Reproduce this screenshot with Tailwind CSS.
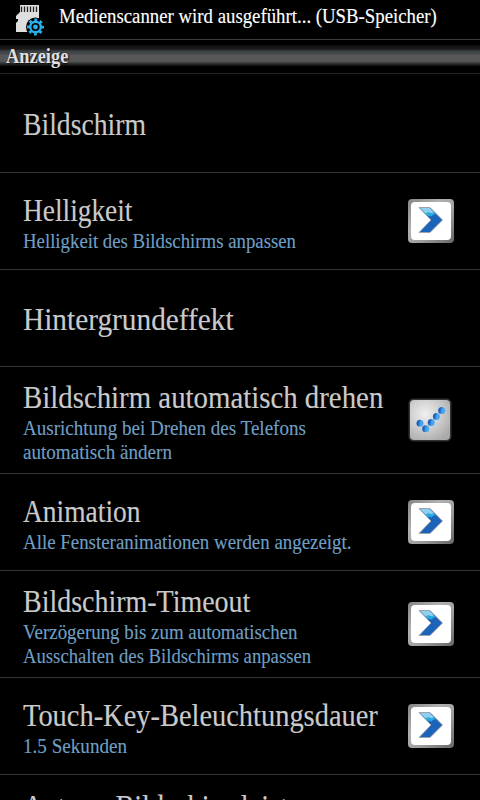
<!DOCTYPE html>
<html lang="de">
<head>
  <meta charset="UTF-8" />
  <meta name="viewport" content="width=device-width, initial-scale=1.0"/>
  <title>Anzeige</title>
  <script src="https://cdn.jsdelivr.net/npm/@tailwindcss/browser@4"></script>
</head>
<body class="bg-black overflow-hidden">
  <!-- Shared icons -->
  <svg class="absolute w-0 h-0">
    <defs>
      <linearGradient id="frame" x1="0" y1="0" x2="1" y2="1">
        <stop offset="0" stop-color="#858585"/>
        <stop offset=".35" stop-color="#b0b0b0"/>
        <stop offset=".6" stop-color="#a0a0a0"/>
        <stop offset="1" stop-color="#666"/>
      </linearGradient>
      <radialGradient id="plate" cx=".38" cy=".35" r=".75">
        <stop offset="0" stop-color="#f0f0f0"/>
        <stop offset=".5" stop-color="#cfcfcf"/>
        <stop offset="1" stop-color="#aaa"/>
      </radialGradient>
      <linearGradient id="ball" x1="0" y1="0" x2="1" y2=".2">
        <stop offset=".3" stop-color="#1a5fbe"/>
        <stop offset=".7" stop-color="#48a8ee"/>
      </linearGradient>
      <symbol id="more" viewBox="0 0 46 44">
        <rect width="46" height="44" rx="4" fill="url(#frame)"/>
        <rect x="3" y="3" width="40" height="38" rx="4" fill="#fff"/>
        <path d="M11 8.500H22L34.500 21L22 33.500H11L23 21Z" fill="#1c63ba" stroke="#a0a0a0" stroke-width=".8"/>
        <path d="M12 9H21.700L26 13.300L24 15L21 13.500L19 16Z" fill="#8fd0f0"/>
        <path d="M17.500 14.500L20 13L22 14.500L26 13.300L27.500 15L25 16L23.500 17.500L21.500 16.500L20.500 17.500Z" fill="#28aee0"/>
      </symbol>
    </defs>
  </svg>

  <div class="w-[480px] h-[800px] overflow-hidden flex flex-col font-['Liberation_Serif',serif] whitespace-nowrap">
    <!-- Status bar -->
    <div class="h-[39px] shrink-0 flex items-start pl-4 text-white">
      <svg class="w-7 h-8 mt-1 shrink-0" viewBox="0 0 28 32">
        <path d="M4 1H23V28H0V19L2 17V15H0V12L4 8Z" fill="#dedede"/>
        <path d="M5.500 2.500V8M8.500 2.500V8M11.500 2.500V8M14.500 2.500V8M17.500 2.500V8M20.500 2.500V8" stroke="#222" stroke-width="1.300"/>
        <circle cx="19.500" cy="23" r="9.500" fill="#000"/>
        <circle cx="19.500" cy="23" r="7.200" fill="none" stroke="#29b0ee" stroke-width="2.600" stroke-dasharray="2.830 2.825" stroke-dashoffset="1.400"/>
        <circle cx="19.500" cy="23" r="5.300" fill="none" stroke="#29b0ee" stroke-width="2.400"/>
        <circle cx="19.500" cy="23" r="2.400" fill="#29b0ee"/>
      </svg>
      <div class="ml-[15px] mt-1 text-[21px] leading-6 origin-left scale-x-[.895] [-webkit-text-stroke:.15px]">Medienscanner wird ausgeführt... (USB-Speicher)</div>
    </div>

    <!-- Title bar -->
    <div class="h-[35px] shrink-0 pt-[5px] border-t border-[#3c3c3c] border-b border-b-[#222]">
      <div class="h-[21px] pl-[6px] bg-[linear-gradient(#0c0c0c_0,#1c1c1c_20%,#3a3f42_28%,#4a4e50_45%,#585858_50%,#555_78%,#383c3e_85%,#0c0c0c_100%)]">
        <div class="w-fit text-[20px] leading-[23px] font-bold text-[#e0e0e0] origin-left scale-x-[.92] [text-shadow:1px_1px_2px_#000]">Anzeige</div>
      </div>
    </div>

    <!-- Settings list -->
    <div class="flex flex-col text-[21px] leading-6 text-[#6f9fc4] [-webkit-text-stroke:.15px]">
      <div class="h-[99px] shrink-0 flex items-center pl-[23px] pt-[4px] border-b border-[#333]">
        <h2 class="text-[31px] leading-[38px] text-[#cacaca] origin-left scale-x-[.893]">Bildschirm</h2>
      </div>

      <div class="h-[97px] shrink-0 flex items-center pl-[23px] border-b border-[#333]">
        <div class="w-[385px] shrink-0 pt-[2px]">
          <h2 class="w-fit -mb-0.5 text-[31px] leading-[40px] text-[#cacaca] origin-left scale-x-[.883]">Helligkeit</h2>
          <p class="w-fit origin-left scale-x-[.895]">Helligkeit des Bildschirms anpassen</p>
        </div>
        <svg class="w-[46px] h-11 shrink-0"><use href="#more"/></svg>
      </div>

      <div class="h-[97px] shrink-0 flex items-center pl-[23px] pt-[3px] border-b border-[#333]">
        <h2 class="text-[31px] leading-[38px] text-[#cacaca] origin-left scale-x-[.946]">Hintergrundeffekt</h2>
      </div>

      <div class="h-[107px] shrink-0 flex items-center pl-[23px] border-b border-[#333]">
        <div class="w-[385px] shrink-0 pt-[2px]">
          <h2 class="w-fit -mb-0.5 text-[31px] leading-[40px] text-[#cacaca] origin-left scale-x-[.93]">Bildschirm automatisch drehen</h2>
          <p class="w-fit origin-left scale-x-[.907]">Ausrichtung bei Drehen des Telefons</p>
          <p class="w-fit origin-left scale-x-[.909]">automatisch ändern</p>
        </div>
        <svg class="w-11 h-11 shrink-0" viewBox="0 0 44 44">
          <rect x=".5" y=".5" width="43" height="43" rx="5" fill="#333"/>
          <rect x="2" y="2" width="40" height="40" rx="4" fill="url(#plate)"/>
          <g fill="url(#ball)">
            <circle cx="12" cy="25.200" r="3.500"/>
            <circle cx="17.700" cy="30.800" r="3.500"/>
            <circle cx="23.200" cy="24.500" r="3.500"/>
            <circle cx="28.400" cy="18.500" r="3.500"/>
            <circle cx="33.700" cy="12.400" r="3.500"/>
          </g>
        </svg>
      </div>

      <div class="h-[97px] shrink-0 flex items-center pl-[23px] border-b border-[#333]">
        <div class="w-[385px] shrink-0 pt-[2px]">
          <h2 class="w-fit -mb-0.5 text-[31px] leading-[40px] text-[#cacaca] origin-left scale-x-[.886]">Animation</h2>
          <p class="w-fit origin-left scale-x-[.9]">Alle Fensteranimationen werden angezeigt.</p>
        </div>
        <svg class="w-[46px] h-11 shrink-0"><use href="#more"/></svg>
      </div>

      <div class="h-[107px] shrink-0 flex items-center pl-[23px] border-b border-[#333]">
        <div class="w-[385px] shrink-0 pt-[2px]">
          <h2 class="w-fit -mb-0.5 text-[31px] leading-[40px] text-[#cacaca] origin-left scale-x-[.902]">Bildschirm-Timeout</h2>
          <p class="w-fit origin-left scale-x-[.9]">Verzögerung bis zum automatischen</p>
          <p class="w-fit origin-left scale-x-[.89]">Ausschalten des Bildschirms anpassen</p>
        </div>
        <svg class="w-[46px] h-11 shrink-0"><use href="#more"/></svg>
      </div>

      <div class="h-[97px] shrink-0 flex items-center pl-[23px] border-b border-[#333]">
        <div class="w-[385px] shrink-0 pt-[2px]">
          <h2 class="w-fit -mb-0.5 text-[31px] leading-[40px] text-[#cacaca] origin-left scale-x-[.917]">Touch-Key-Beleuchtungsdauer</h2>
          <p class="w-fit origin-left scale-x-[.91]">1.5 Sekunden</p>
        </div>
        <svg class="w-[46px] h-11 shrink-0"><use href="#more"/></svg>
      </div>

      <div class="pl-[23px] pt-[13px]">
        <h2 class="w-fit text-[31px] leading-[38px] text-[#cacaca] origin-left scale-x-[.91]">Autom. Bildschirmleistung</h2>
      </div>
    </div>
  </div>
</body>
</html>
